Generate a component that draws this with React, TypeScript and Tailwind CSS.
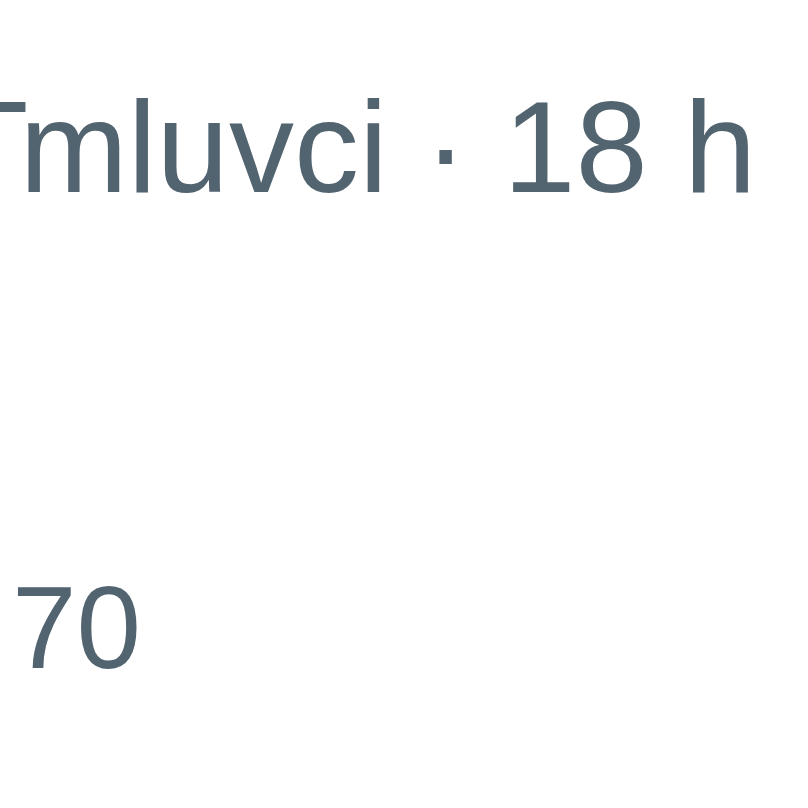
export default function App() {
  return (
    <div className="h-[808px] w-[808px] overflow-hidden bg-white text-[#536471]" style={{ fontFamily: '"Liberation Sans", Arial, sans-serif' }}>
      <div className="pt-[82px] whitespace-nowrap text-[130px] leading-[130px]">
        <span className="ml-[-51px] mr-[-9px]">T</span>
        <span>mluvci · 18 h</span>
      </div>
      <div className="mt-[358px] whitespace-nowrap pl-[12px] text-[116px] leading-[116px]">70</div>
    </div>
  );
}
